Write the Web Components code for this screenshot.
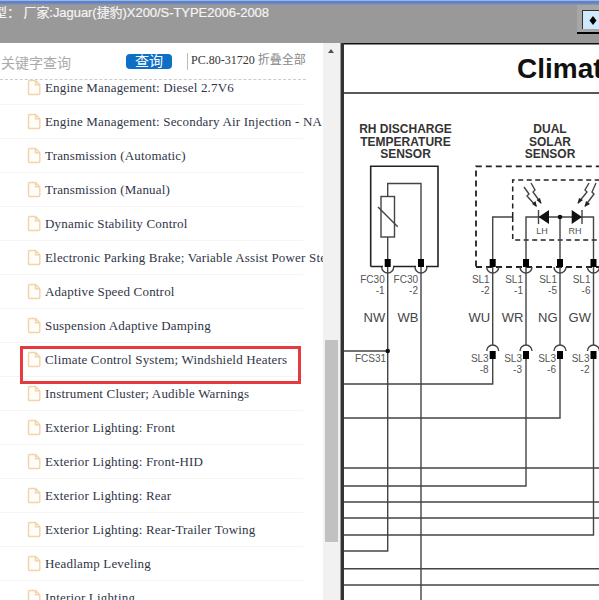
<!DOCTYPE html>
<html lang="zh">
<head>
<meta charset="utf-8">
<title>Climate Control System</title>
<style>
	html, body { margin: 0; padding: 0; height: 100%; overflow: hidden; background: #999; }
	body { font-family: "Liberation Sans", "Noto Sans CJK SC", sans-serif; }
</style>
</head>
<body>
<viewer-app>
	<viewer-titlebar slot="top">型： 厂家:Jaguar(捷豹)X200/S-TYPE2006-2008</viewer-titlebar>
	<catalog-panel slot="side"></catalog-panel>
	<wiring-diagram slot="main"></wiring-diagram>
</viewer-app>

<script>
class ViewerApp extends HTMLElement {
	constructor() {
		super()
		this.attachShadow({ mode: 'open' })
		this.shadowRoot.innerHTML = /* html */ `
			<style>
				:host { display: flex; flex-direction: column; width: 599px; height: 600px; overflow: hidden; }
				.body { display: flex; flex: 1; min-height: 0; }
				.gap { width: 1px; background: #999; }
			</style>
			<slot name="top"></slot>
			<div class="body">
				<slot name="side"></slot>
				<div class="gap"></div>
				<slot name="main"></slot>
			</div>
		`
	}
}

class ViewerTitlebar extends HTMLElement {
	constructor() {
		super()
		this.attachShadow({ mode: 'open' })
		this.shadowRoot.innerHTML = /* html */ `
			<style>
				:host {
					display: block; position: relative; height: 43px; flex: none; overflow: hidden;
					background: linear-gradient(#dfe6f5 0, #5f82cc 1px, #5f82cc 3px, #7f8fb4 4px, #999 5px);
				}
				.text {
					padding: 4px 0 0 0; margin-left: -6px; white-space: nowrap; letter-spacing: -.05px;
					color: #f4f4f4; font: 13px/18px "Liberation Sans", "Noto Sans CJK SC", sans-serif;
					-webkit-text-stroke: .2px #f4f4f4;
				}
				.tool {
					position: absolute; left: 577px; top: 5px; width: 22px; height: 27px;
					background: #a6a6a6; border-bottom: 2px solid #000;
				}
				.btn {
					position: absolute; left: 5px; top: 5px; width: 20px; height: 18px;
					background: #cfe8fb; border-top: 1px solid #333; border-left: 1px solid #333;
				}
				.btn svg { position: absolute; left: 6px; top: 5px; }
			</style>
			<div class="text"><slot></slot></div>
			<div class="tool"><div class="btn">
				<svg width="8" height="9" viewBox="0 0 8 9"><path d="M4 0 7.500 4.500 4 9 .5 4.500Z" fill="#000"/></svg>
			</div></div>
		`
	}
}

class SearchBar extends HTMLElement {
	constructor() {
		super()
		this.attachShadow({ mode: 'open' })
		this.shadowRoot.innerHTML = /* html */ `
			<style>
				:host {
					display: flex; align-items: flex-start; height: 37px; flex: none; position: relative; z-index: 1;
					box-sizing: border-box; width: 306px; background: #fff; border-bottom: 1px dashed #ccc;
					font: 14px/20px "Liberation Sans", "Noto Sans CJK SC", sans-serif;
				}
				.key { width: 126px; padding: 10px 0 0 1px; box-sizing: border-box; color: #aaa; }
				.go {
					width: 46px; height: 15px; margin-top: 11px; border-radius: 4px; background: #0d6fc6;
					color: #fff; text-align: center; line-height: 15px;
				}
				.sep { width: 1px; height: 17px; margin: 10px 3px 0 15px; background: #bbb; }
				.code { padding-top: 7px; font: 12px/20px "Liberation Serif", "Noto Sans CJK SC", serif; color: #333; white-space: nowrap; }
				.fold { color: #888; font-family: "Liberation Sans", "Noto Sans CJK SC", sans-serif; }
			</style>
			<span class="key">关键字查询</span>
			<span class="go">查询</span>
			<span class="sep"></span>
			<span class="code">PC.80-31720 <span class="fold">折叠全部</span></span>
		`
	}
}

class TreeRow extends HTMLElement {
	constructor() {
		super()
		this.attachShadow({ mode: 'open' })
		this.shadowRoot.innerHTML = /* html */ `
			<style>
				:host {
					display: flex; align-items: center; height: 34px; box-sizing: border-box; position: relative;
					width: 303px; padding-left: 27px; border-bottom: 1px solid #f5f5f5; white-space: nowrap;
					color: #2f3547; font: 13px/18px "Liberation Serif", serif; letter-spacing: .18px;
				}
				svg { flex: none; margin-right: 4px; }
				:host([selected])::after {
					content: ''; position: absolute; left: 20px; top: 3px; width: 281px; height: 38px;
					box-sizing: border-box; border: 3px solid #e53a40;
				}
			</style>
			<svg width="14" height="17" viewBox="0 0 14 17">
				<path d="M1.500 2.500A1 1 0 0 1 2.500 1.500H8.500L12.800 5.800V14.500A1 1 0 0 1 11.800 15.500H2.500A1 1 0 0 1 1.500 14.500Z M8.500 1.500V5.800H12.800" fill="#fffdf9" stroke="#f3d3a8" stroke-width="1.4"/>
			</svg>
			<slot></slot>
		`
	}
}

class CatalogPanel extends HTMLElement {
	constructor() {
		super()
		this.attachShadow({ mode: 'open' })
		const names = [
			'Engine Management: Diesel 2.7V6',
			'Engine Management: Secondary Air Injection - NA',
			'Transmission (Automatic)',
			'Transmission (Manual)',
			'Dynamic Stability Control',
			'Electronic Parking Brake; Variable Assist Power Steering',
			'Adaptive Speed Control',
			'Suspension Adaptive Damping',
			'Climate Control System; Windshield Heaters',
			'Instrument Cluster; Audible Warnings',
			'Exterior Lighting: Front',
			'Exterior Lighting: Front-HID',
			'Exterior Lighting: Rear',
			'Exterior Lighting: Rear-Trailer Towing',
			'Headlamp Leveling',
			'Interior Lighting'
		]
		const rows = names.map(n =>
			`<tree-row${n.startsWith('Climate') ? ' selected' : ''}>${n}</tree-row>`
		).join('')
		this.shadowRoot.innerHTML = /* html */ `
			<style>
				:host { display: flex; width: 340px; flex: none; background: #fff; overflow: hidden; }
				.content { width: 323px; flex: none; overflow: hidden; display: flex; flex-direction: column; }
				.list { margin-top: -9px; }
				.track { flex: 1; background: #f1f1f1; position: relative; }
				.arrow {
					position: absolute; left: 5px; top: 6px; width: 0; height: 0;
					border: 3.5px solid transparent; border-top: 0; border-bottom: 4px solid #505050;
				}
				.thumb { position: absolute; left: 2px; top: 297px; width: 13px; height: 202px; background: #c1c1c1; }
			</style>
			<div class="content">
				<search-bar></search-bar>
				<div class="list">${rows}</div>
			</div>
			<div class="track"><div class="arrow"></div><div class="thumb"></div></div>
		`
	}
}

class WiringDiagram extends HTMLElement {
	constructor() {
		super()
		this.attachShadow({ mode: 'open' })
		const arc = (x, y, up) =>
			`<path class="w" d="M${x - 6} ${y}A6 6 0 0 ${up ? 1 : 0} ${x + 6} ${y}"/>`
		const pin = (x, y) => `<rect x="${x - 3}" y="${y}" width="6" height="8" fill="#000"/>`
		const top = (x, a, b, c) => `
			${pin(x, 259)}${arc(x, 267, false)}
			<text class="s" x="${x - 3}" y="283" text-anchor="end">${a}</text>
			<text class="s" x="${x - 3}" y="294" text-anchor="end">${b}</text>
			<text class="n" x="${x - 2.5}" y="321.500" text-anchor="end">${c}</text>`
		const low = (x, a, b) => `
			${pin(x, 351)}${arc(x, 351, true)}
			<text class="s" x="${x - 4}" y="362" text-anchor="end">${a}</text>
			<text class="s" x="${x - 4}" y="373" text-anchor="end">${b}</text>`
		this.shadowRoot.innerHTML = /* html */ `
			<style>
				:host { display: block; width: 258px; height: 557px; flex: none; background: #fff; overflow: hidden; }
				svg { display: block; }
				.w { fill: none; stroke: #444; stroke-width: 1.4; }
				.b { fill: none; stroke: #222; stroke-width: 1.6; }
				.d { fill: none; stroke: #222; stroke-width: 1.8; stroke-dasharray: 6 4; }
				.d2 { fill: none; stroke: #222; stroke-width: 1.5; stroke-dasharray: 5 3.500; }
				text { font-family: "Liberation Sans", sans-serif; }
				.h { font-size: 12px; font-weight: bold; fill: #333; text-anchor: middle; }
				.t { font-size: 28px; font-weight: bold; fill: #111; }
				.s { font-size: 10px; fill: #555; }
				.n { font-size: 13px; fill: #444; }
				.m { font-size: 9px; fill: #555; text-anchor: middle; }
			</style>
			<svg width="258" height="557" viewBox="341 43 258 557">
				<rect x="341" y="43" width="258" height="1.500" fill="#111"/>
				<rect x="341" y="43" width="3" height="557" fill="#333"/>
				<path class="b" d="M344 93H599"/>
				<text class="t" x="517" y="78">Climate</text>

				<text class="h" x="405.500" y="133">RH DISCHARGE</text>
				<text class="h" x="405.500" y="145.500">TEMPERATURE</text>
				<text class="h" x="405.500" y="158">SENSOR</text>
				<text class="h" x="550" y="133">DUAL</text>
				<text class="h" x="550" y="145.500">SOLAR</text>
				<text class="h" x="550" y="158">SENSOR</text>

				<path class="b" d="M370.700 266.500V166.300H438V266.500H426M383 266.500H370.700M393 266.500H416"/>
				<path class="w" d="M387.700 260V237M387.700 196.500V183.500H421V260"/>
				<rect class="w" x="381" y="196.500" width="13.500" height="40.500"/>
				<path class="w" d="M378 207 397.700 226.700"/>

				<path class="d" d="M476 266.500V166.300H599M476 267H599"/>
				<path class="d2" d="M512.700 217V180H599M512.700 217V240H599"/>
				<path class="w" d="M492.700 260V217H512M526 260V217H593.500V260M560 217V260"/>
				<path d="M549 210V224L538.500 217Z M571.700 210V224L582 217Z" fill="#111"/>
				<path class="w" d="M538.500 210V224M582 210V224"/>
				<circle cx="560" cy="217" r="2.300" fill="#111"/>
				<text class="m" x="542" y="234">LH</text>
				<text class="m" x="575" y="234">RH</text>
				<path class="w" stroke-width="1" d="M531 183 535 190 533 192 541 203M524 187 529 194 527 196 536 206M589 183 585 190 587 192 578 203M596 183 592 192 594 194 585 206"/>
				<path d="M541.500 204 536.500 200 540 198ZM537 207 532 204 535.500 201ZM577.500 204 579 198 583 200ZM584.500 207 586 201 590 204Z" fill="#222"/>

				${top(387.7, 'FC30', '-1', 'NW')}
				${top(421, 'FC30', '-2', 'WB')}
				${top(492.7, 'SL1', '-2', 'WU')}
				${top(526, 'SL1', '-1', 'WR')}
				${top(560, 'SL1', '-5', 'NG')}
				${top(593.5, 'SL1', '-6', 'GW')}

				${low(492.7, 'SL3', '-8')}
				${low(526, 'SL3', '-3')}
				${low(560, 'SL3', '-6')}
				${low(593.5, 'SL3', '-2')}

				<path class="w" d="M387.700 267V551H344M421 267V600"/>
				<path class="w" d="M492.700 267V345M526 267V345M560 267V345M593.500 267V345"/>
				<path class="w" d="M344 351H387.700"/>
				<circle cx="387.700" cy="351" r="2.300" fill="#111"/>
				<text class="s" x="355" y="362">FCS31</text>
				<path class="w" d="M492.700 359V384H344M560 359V418H344M526 359V486H344M593.500 359V535H344"/>
				<path class="w" d="M344 468H599M344 502H599M344 518H599M344 568.700H599M344 585H599"/>
			</svg>
		`
	}
}

customElements.define('viewer-app', ViewerApp)
customElements.define('viewer-titlebar', ViewerTitlebar)
customElements.define('search-bar', SearchBar)
customElements.define('tree-row', TreeRow)
customElements.define('catalog-panel', CatalogPanel)
customElements.define('wiring-diagram', WiringDiagram)
</script>
</body>
</html>
